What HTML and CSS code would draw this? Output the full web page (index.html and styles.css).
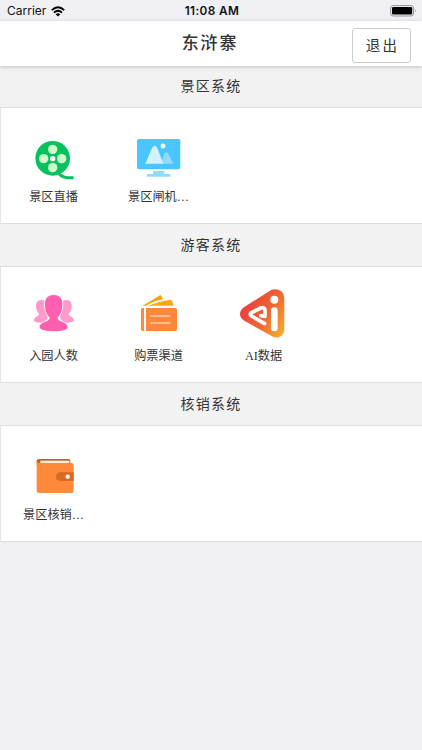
FILE: index.html
```html
<!DOCTYPE html>
<html lang="zh-CN">
<head>
<meta charset="utf-8">
<title>东浒寨</title>
<link rel="stylesheet" href="styles.css">
</head>
<body>
<div class="status">
  <div class="carrier">Carrier
    <svg class="wifi" viewBox="0 0 14 11"><g fill="none" stroke="#000" stroke-width="1.9"><path d="M.8 4.1Q7-1.7 13.2 4.1"/><path d="M3 6.6Q7 3 11 6.6"/></g><path d="M4.7 8.2Q7 6.2 9.3 8.2L7 10.6z"/></svg>
  </div>
  <div class="time">11:08 AM</div>
  <div class="power"><svg class="battery" viewBox="0 0 27 12"><rect x=".6" y=".6" width="23" height="10.4" rx="2.6" fill="none" stroke="#929298"/><rect x="2" y="2" width="20.2" height="7.6" rx="1.3"/><path d="M25 4q1.5 1.8 0 3.6z" fill="#929298"/></svg></div>
</div>
<header class="header">
  <h1 class="title">东浒寨</h1>
  <button class="logout">退出</button>
</header>
<main>
  <section>
    <h2 class="heading">景区系统</h2>
    <div class="grid">
      <a class="item">
        <svg class="icon" viewBox="12 -6 180 156"><circle cx="98" cy="85" r="52" fill="#06c160"/><path d="M117 131Q130 146 161 143" fill="none" stroke="#06c160" stroke-width="9"/><g fill="#ceffc9"><circle cx="98" cy="58" r="14"/><circle cx="71" cy="86" r="14"/><circle cx="125" cy="86" r="14"/><circle cx="98" cy="113" r="14"/></g><circle cx="98" cy="86" r="8" fill="#fff"/></svg>
        <span class="label">景区直播</span>
      </a>
      <a class="item">
        <svg class="icon" viewBox="27 -6 180 156"><rect x="51" y="27" width="130" height="91" rx="6" fill="#4bc5ff"/><path d="M122 101L134 70q5-7 10 0l16 31z" fill="#8fdcff"/><path d="M76 101L96 54q8-13 16 0l18 47z" fill="#d2f2ff"/><circle cx="129" cy="48" r="7.5" fill="#e8f8ff"/><path d="M99 123h34v9h18v8H81v-8h18z" fill="#90daff"/></svg>
        <span class="label">景区闸机…</span>
      </a>
    </div>
  </section>
  <section>
    <h2 class="heading">游客系统</h2>
    <div class="grid">
      <a class="item">
        <svg class="icon" viewBox="12 6 180 156"><g fill="#ff9acb"><path id="side" d="M64 45c-12 0-17 9-16 21 1 10 4 16 9 20 0 9-16 9-16 20 0 5 12 8 29 8l12-12V58C79 49 73 45 64 45z"/><use href="#side" transform="matrix(-1 0 0 1 203 0)"/></g><path d="M101 30c-20 0-28 14-26 32 1 18 6 27 14 35 2 16-30 11-30 30 0 16 84 16 84 0 0-19-32-14-30-30 8-8 13-17 14-35 2-18-6-32-26-32z" fill="#ff5faf" stroke="#fff" stroke-width="5" paint-order="stroke"/></svg>
        <span class="label">入园人数</span>
      </a>
      <a class="item">
        <svg class="icon" viewBox="27 6 180 156"><path d="M68 62L120 31q3-1 4 2l5 10q-28 5-51 19z" fill="#f5a500"/><path d="M85 62q32-14 67-18 3 0 4 3l5 15z" fill="#f8a80c"/><path d="M72 69v69h-4q-5 0-5-5V74q0-5 5-5zM78 69h88q5 0 5 5v59q0 5-5 5H78z" fill="#ff883c"/><path d="M91 93h60M91 114h60" stroke="#ffd0ac" stroke-width="4"/></svg>
        <span class="label">购票渠道</span>
      </a>
      <a class="item">
        <svg class="icon" viewBox="27 21 180 156"><defs><linearGradient id="ai" x1="0" y1=".2" x2="1" y2=".9"><stop offset=".15" stop-color="#e9423f"/><stop offset=".55" stop-color="#ef652f"/><stop offset="1" stop-color="#f6ae2f"/></linearGradient></defs><path d="M137 31Q155 24 169 34q9 8 9 20v94q0 17-15 23-11 4-22-2L58 122q-13-8-13-20t13-21z" fill="url(#ai)"/><g fill="none" stroke="#fff" stroke-linecap="round" stroke-linejoin="round"><path d="M107 107l13 2V90Q119 80 107 84L78 99q-5 4 1 9l40 23" stroke-width="11"/><path d="M148 92v52" stroke-width="20"/></g><circle cx="148" cy="59" r="12" fill="#fff"/></svg>
        <span class="label">AI数据</span>
      </a>
    </div>
  </section>
  <section>
    <h2 class="heading">核销系统</h2>
    <div class="grid">
      <a class="item">
        <svg class="icon" viewBox="42 -12 180 156"><path d="M80 46V34q0-7 8-7h88q5 0 5 5v10z" fill="#c95f1e"/><path d="M91 32h87v10H91z" fill="#fff0d8"/><path d="M80 31q1 8 10 8h94q7 0 7 7v76q0 7-7 7H87q-7 0-7-7z" fill="#ff893b"/><path d="M191 67h-39q-14 0-14 13t14 13h39z" fill="#d86a21"/><circle cx="173" cy="80" r="6.5" fill="#fff"/></svg>
        <span class="label">景区核销…</span>
      </a>
    </div>
  </section>
</main>
</body>
</html>
```
FILE: styles.css
```css
* { box-sizing: border-box; }

body {
  margin: 0;
  min-height: 750px;
  background: #efeff4;
  color: #333;
  font-family: "Liberation Serif", "Noto Sans CJK SC", serif;
}

.status {
  display: grid;
  grid-template-columns: 1fr auto 1fr;
  align-items: center;
  height: 21px;
  padding: 1px 5px 0 7px;
  color: #111;
  font: 12px/20px Inter, sans-serif;
}

.carrier {
  display: flex;
  align-items: center;
  gap: 5px;
}

.wifi { width: 14px; height: 11px; }

.time {
  font-size: 11.8px;
  font-weight: 600;
  letter-spacing: 0.4px;
}

.power {
  display: flex;
  justify-content: flex-end;
}

.battery { width: 27px; height: 12px; }

.header {
  position: relative;
  display: grid;
  grid-template-columns: 1fr auto 1fr;
  align-items: center;
  height: 45px;
  padding-right: 11px;
  padding-left: 9px;
  background: #fff;
  box-shadow: 0 1px 4px rgba(0, 0, 0, 0.2);
}

.title {
  grid-column: 2;
  margin: 0;
  font-size: 17px;
  font-weight: 500;
  line-height: 24px;
  letter-spacing: 1.8px;
}

.logout {
  justify-self: end;
  width: 59px;
  height: 35px;
  margin-top: 3px;
  padding: 0 0 2px 2px;
  border: 1px solid #ccc;
  border-radius: 3px;
  background: #fff;
  color: #333;
  font-family: inherit;
  font-size: 14.5px;
  letter-spacing: 2.2px;
}

.heading {
  height: 42px;
  margin: 0;
  border-bottom: 1px solid #dedede;
  background: #f2f2f2;
  font-size: 14px;
  font-weight: 400;
  line-height: 41px;
  letter-spacing: 1.3px;
  text-align: center;
}

.grid {
  display: grid;
  grid-template-columns: repeat(4, 105px);
  height: 116px;
  padding-top: 20px;
  border-bottom: 1px solid #dedede;
  border-left: 1px solid #e5e5e5;
  background: #fff;
}

section + section .heading {
  height: 43px;
  padding-top: 1px;
}

.item {
  display: flex;
  flex-direction: column;
  align-items: center;
  gap: 8px;
}

.icon {
  width: 60px;
  height: 52px;
}

.label {
  font-size: 12.2px;
  line-height: 18px;
  white-space: nowrap;
}
```
